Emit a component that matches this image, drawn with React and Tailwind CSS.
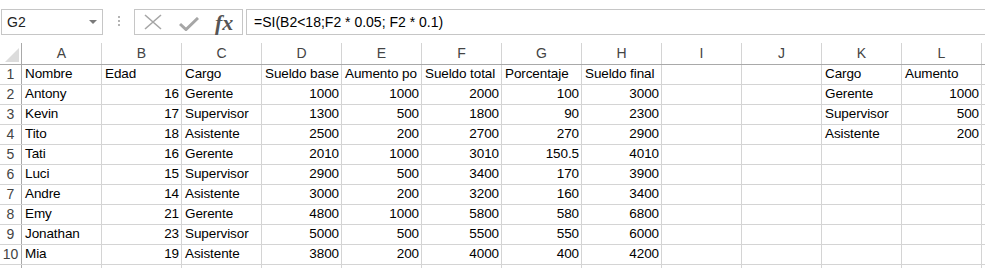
import React from 'react';

const COLS = ['A', 'B', 'C', 'D', 'E', 'F', 'G', 'H', 'I', 'J', 'K', 'L'];

// one entry per row, 12 cells; numbers are right-aligned, null = empty
const ROWS = [
    ['Nombre', 'Edad', 'Cargo', 'Sueldo base', 'Aumento po', 'Sueldo total', 'Porcentaje', 'Sueldo final', null, null, 'Cargo', 'Aumento'],
    ['Antony', 16, 'Gerente', 1000, 1000, 2000, 100, 3000, null, null, 'Gerente', 1000],
    ['Kevin', 17, 'Supervisor', 1300, 500, 1800, 90, 2300, null, null, 'Supervisor', 500],
    ['Tito', 18, 'Asistente', 2500, 200, 2700, 270, 2900, null, null, 'Asistente', 200],
    ['Tati', 16, 'Gerente', 2010, 1000, 3010, 150.5, 4010, null, null, null, null],
    ['Luci', 15, 'Supervisor', 2900, 500, 3400, 170, 3900, null, null, null, null],
    ['Andre', 14, 'Asistente', 3000, 200, 3200, 160, 3400, null, null, null, null],
    ['Emy', 21, 'Gerente', 4800, 1000, 5800, 580, 6800, null, null, null, null],
    ['Jonathan', 23, 'Supervisor', 5000, 500, 5500, 550, 6000, null, null, null, null],
    ['Mia', 19, 'Asistente', 3800, 200, 4000, 400, 4200, null, null, null, null],
];

function FormulaBar() {
    return (
        <div className="flex h-[43px] items-start pt-[9px] text-[14px] text-[#222]">
            <div className="ml-px flex h-[26px] w-[102px] items-center justify-between border border-[#c6c6c6] pl-[5px] pr-[5px]">
                <span>G2</span>
                <span className="h-0 w-0 border-x-[4px] border-t-[4px] border-x-transparent border-t-[#7a7a7a]" />
            </div>
            <div className="flex w-[31px] flex-col items-center gap-[2px] pt-[7px]">
                <span className="h-[2px] w-[2px] bg-[#b4b4b4]" />
                <span className="h-[2px] w-[2px] bg-[#b4b4b4]" />
                <span className="h-[2px] w-[2px] bg-[#b4b4b4]" />
            </div>
            <div className="flex h-[26px] w-[109px] items-center border border-[#c6c6c6]">
                <svg width="20" height="16" viewBox="0 0 20 16" className="ml-[8px]">
                    <path d="M2 1 L18 15 M18 1 L2 15" stroke="#a6a6a6" strokeWidth="1.6" fill="none" />
                </svg>
                <svg width="20" height="14" viewBox="0 0 20 14" className="ml-[16px] mt-[4px]">
                    <path d="M1 7 L7 12.5 L19 1" stroke="#a6a6a6" strokeWidth="3" fill="none" />
                </svg>
                <span className="ml-[16px] mt-[1px] font-['Liberation_Serif',serif] text-[22px] font-semibold italic leading-none text-[#555]">
                    fx
                </span>
            </div>
            <div className="ml-[3px] flex h-[26px] flex-1 items-center border border-r-0 border-[#c6c6c6] pl-[7px] text-black">
                =SI(B2&lt;18;F2 * 0.05; F2 * 0.1)
            </div>
        </div>
    );
}

function Cell({ value }) {
    const isNum = typeof value === 'number';
    return (
        <div
            className={`flex h-full w-[80px] shrink-0 items-center overflow-hidden whitespace-nowrap border-r border-[#d4d4d4] pl-[3px] ${isNum ? 'justify-end pr-[2px]' : 'pr-0'}`}
        >
            {value}
        </div>
    );
}

export default function App() {
    return (
        <div className="h-[268px] w-[985px] overflow-hidden bg-white font-['Liberation_Sans',Arial,sans-serif] text-[14px]">
            <FormulaBar />
            <div className="flex h-[22px] border-b border-[#a9a9a9] text-[#444]">
                <div className="relative h-full w-[22px] shrink-0 border-r border-[#a9a9a9]">
                    <span className="absolute bottom-[2px] right-[2px] h-0 w-0 border-b-[14px] border-l-[14px] border-b-[#dcdcdc] border-l-transparent" />
                </div>
                {COLS.map((c) => (
                    <div key={c} className="flex h-full w-[80px] shrink-0 items-center justify-center border-r border-[#d4d4d4]">
                        {c}
                    </div>
                ))}
                <div className="flex-1" />
            </div>
            <div className="text-[13.5px] tracking-[-0.1px]">
                {ROWS.map((row, i) => (
                    <div key={i} className="flex h-[20px] border-b border-[#d4d4d4] text-black">
                        <div className="flex h-full w-[22px] shrink-0 items-center justify-center border-r border-[#a9a9a9] text-[14px] tracking-normal text-[#444]">
                            {i + 1}
                        </div>
                        {row.map((v, j) => (
                            <Cell key={j} value={v} />
                        ))}
                        <div className="flex-1" />
                    </div>
                ))}
                {/* row 11, only its top few pixels are in view */}
                <div className="flex h-[20px]">
                    <div className="h-full w-[22px] shrink-0 border-r border-[#a9a9a9]" />
                    {COLS.map((c) => (
                        <div key={c} className="h-full w-[80px] shrink-0 border-r border-[#d4d4d4]" />
                    ))}
                </div>
            </div>
        </div>
    );
}
